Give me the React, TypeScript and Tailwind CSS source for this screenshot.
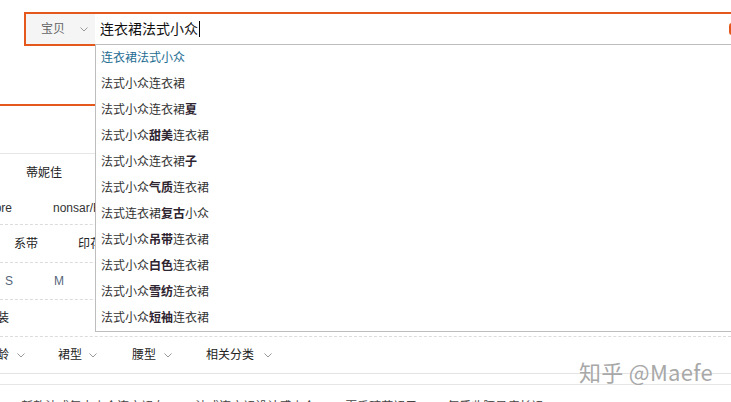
import React from "react";

const ORANGE = "#e4581d";

function Chevron({ className = "" }: { className?: string }) {
  return (
    <svg width="8" height="5" viewBox="0 0 8 5" className={className}>
      <path d="M0.5 0.5 L4 4 L7.5 0.5" fill="none" stroke="#999" strokeWidth="1" />
    </svg>
  );
}

type Item = { parts: { t: string; b?: boolean }[] };

const items: Item[] = [
  { parts: [{ t: "法式小众连衣裙" }] },
  { parts: [{ t: "法式小众连衣裙" }, { t: "夏", b: true }] },
  { parts: [{ t: "法式小众" }, { t: "甜美", b: true }, { t: "连衣裙" }] },
  { parts: [{ t: "法式小众连衣裙" }, { t: "子", b: true }] },
  { parts: [{ t: "法式小众" }, { t: "气质", b: true }, { t: "连衣裙" }] },
  { parts: [{ t: "法式连衣裙" }, { t: "复古", b: true }, { t: "小众" }] },
  { parts: [{ t: "法式小众" }, { t: "吊带", b: true }, { t: "连衣裙" }] },
  { parts: [{ t: "法式小众" }, { t: "白色", b: true }, { t: "连衣裙" }] },
  { parts: [{ t: "法式小众" }, { t: "雪纺", b: true }, { t: "连衣裙" }] },
  { parts: [{ t: "法式小众" }, { t: "短袖", b: true }, { t: "连衣裙" }] },
];

export default function App() {
  return (
    <div
      className="relative w-[731px] h-[402px] overflow-hidden bg-white text-[12px] text-[#222]"
      style={{ fontFamily: '"Liberation Sans", "Noto Sans CJK SC", sans-serif' }}
    >
      <div className="h-[12px]" />
      {/* search box */}
      <div className="ml-[24px] flex h-[34px] w-[720px] border-2 border-r-0 border-[#e4581d]">
        <div className="flex w-[69px] items-center bg-[#f5f5f5] text-[#666]">
          <span className="ml-[15px] text-[12px]">宝贝</span>
          <Chevron className="ml-[15px]" />
        </div>
        <div className="flex w-[634px] items-center pl-[5px] text-[14px] text-[#111]">
          <span>连衣裙法式小众</span>
          <span className="ml-[1px] h-[16px] w-[1px] bg-black" />
        </div>
        <div className="flex items-center">
          <div className="h-[12px] w-[10px] rounded-l-[3px] bg-[#e4581d]" />
        </div>
      </div>

      <div className="h-[58px]" />
      <div className="h-[2px] w-full" style={{ backgroundColor: ORANGE }} />
      <div className="h-[47px]" />
      <div className="h-[1px] w-full bg-[#e6e6e6]" />

      {/* brand rows */}
      <div className="flex h-[37px] items-center">
        <span className="ml-[26px]">蒂妮佳</span>
      </div>
      <div className="flex h-[34px] items-center border-b border-dashed border-[#dcdcdc]">
        <span className="-ml-[16px] w-[28px] text-right text-[#333]">More</span>
        <span className="ml-[41px] text-[#333]">nonsar/Feel</span>
      </div>
      <div className="flex h-[38px] items-center border-b border-dashed border-[#dcdcdc]">
        <span className="ml-[14px]">系带</span>
        <span className="ml-[40px]">印花</span>
      </div>
      <div className="flex h-[37px] items-center border-b border-dashed border-[#dcdcdc] text-[#56657a]">
        <span className="ml-[5px]">S</span>
        <span className="ml-[41px]">M</span>
      </div>
      <div className="flex h-[37px] items-center border-b border-dashed border-[#dcdcdc]">
        <span className="-ml-[3px]">装</span>
      </div>
      <div className="flex h-[37px] items-center border-b border-[#e3e3e3]">
        <span className="-ml-[3px]">龄</span>
        <Chevron className="ml-[8px]" />
        <span className="ml-[33px]">裙型</span>
        <Chevron className="ml-[7px]" />
        <span className="ml-[35px]">腰型</span>
        <Chevron className="ml-[8px]" />
        <span className="ml-[34px]">相关分类</span>
        <Chevron className="ml-[10px]" />
      </div>
      <div className="h-[10px]" />
      <div className="h-[1px] w-full bg-[#e6e6e6]" />
      <div className="mt-[13px] flex gap-[30px] pl-[10px] text-[12px] text-[#444]">
        <span>“■新款法式复古小众连衣裙女</span>
        <span>法式连衣裙设计感小众</span>
        <span>夏季碎花裙子</span>
        <span>气质收腰显瘦长裙</span>
      </div>

      {/* watermark */}
      <div
        className="absolute left-[579px] top-[357px] text-[22px] leading-[29px] tracking-[0.3px] text-[#a8a8a8]"
        style={{ fontFamily: '"Noto Sans CJK SC", "Liberation Sans", sans-serif', textShadow: "0 0 2px #fff" }}
      >
        知乎 @Maefe
      </div>

      {/* suggestion dropdown */}
      <div className="absolute left-[95px] top-[44px] w-[660px] border border-[#bdbdbd] bg-white">
        <div className="flex h-[26px] items-center pl-[5px] text-[#1e6d92]">连衣裙法式小众</div>
        {items.map((it, i) => (
          <div key={i} className="flex h-[26px] items-center pl-[5px] text-[#333]">
            {it.parts.map((p, j) =>
              p.b ? (
                <b key={j} className="font-bold text-[#2e2430]">
                  {p.t}
                </b>
              ) : (
                <span key={j}>{p.t}</span>
              )
            )}
          </div>
        ))}
      </div>
    </div>
  );
}
